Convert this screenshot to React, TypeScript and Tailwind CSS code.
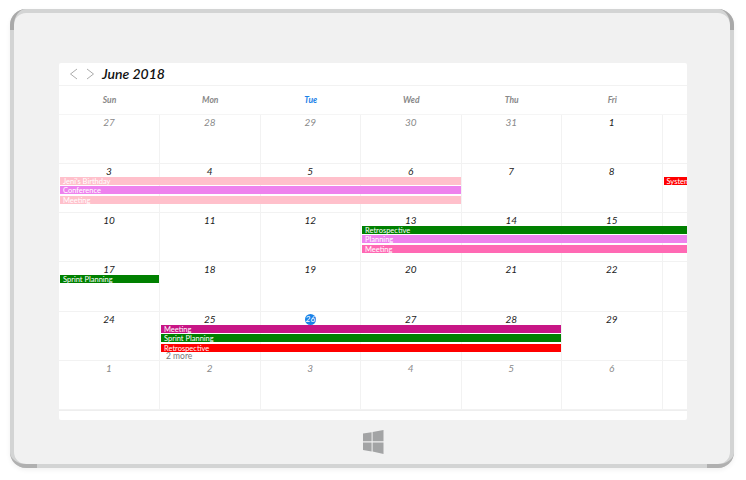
import React from "react";

const COLS_TEMPLATE = "grid-cols-[101px_100.5px_100.5px_100.5px_100.5px_100.5px_100.5px]";

function Bar({ label, cls, pos }: { label: string; cls: string; pos: string }) {
  return (
    <div className={`${pos} ${cls} h-2 my-px mx-px overflow-hidden whitespace-nowrap pl-[3px] text-[7.5px] leading-[10px] text-white z-10`}>
      {label}
    </div>
  );
}

function Cell({ d, col, muted, today }: { d?: number; col: string; muted?: boolean; today?: boolean }) {
  return (
    <div className={`${col} row-start-1 row-span-5 border-r border-[#f2f2f2] flex justify-center`}>
      {today ? (
        <span className="w-[11px] h-[11px] mt-[2px] rounded-full bg-[#1b82e8] text-white text-[8.5px] leading-[11px] italic text-center">{d}</span>
      ) : (
        <span className={`text-[10px] leading-[14px] italic ${muted ? "text-[#8a8a8a]" : "text-[#222]"}`}>{d}</span>
      )}
    </div>
  );
}

const COLS = ["col-start-1", "col-start-2", "col-start-3", "col-start-4", "col-start-5", "col-start-6"];

function Week({ days, muted, today, children, h }: { days: number[]; muted?: number[]; today?: number; children?: React.ReactNode; h: string }) {
  return (
    <div className={`${h} shrink-0 border-b border-[#f2f2f2] grid ${COLS_TEMPLATE} grid-rows-[12px_9.33px_9.33px_9.33px_1fr] overflow-hidden`}>
      {days.map((d, i) => (
        <Cell key={i} d={d} col={COLS[i]} today={today === i} muted={muted?.includes(d)} />
      ))}
      {children}
    </div>
  );
}

export default function App() {
  return (
    <div className="[font-family:'Lato','Open_Sans',sans-serif] w-[746px] h-[480px] bg-white overflow-hidden pt-[9px] pl-[10px]">
      <div className="relative w-[724px] h-[459px] rounded-[16px] border-[4px] border-[#d3d4d4] bg-[#f1f1f1] shadow-[0_2px_5px_rgba(0,0,0,0.06)] pt-[50px] pl-[45px]">
        <div className="absolute -left-1 -top-1 w-[16px] h-[21px] border-l-[4px] rounded-tl-[16px] border-[#a9a9a9]" />
        <div className="absolute -right-1 -top-1 w-[16px] h-[21px] border-r-[4px] rounded-tr-[16px] border-[#a9a9a9]" />
        <div className="absolute -left-1 -bottom-1 w-[27px] h-[16px] border-b-[4px] rounded-bl-[16px] border-[#b0b0b0]" />
        <div className="absolute -right-1 -bottom-1 w-[27px] h-[16px] border-b-[4px] rounded-br-[16px] border-[#b0b0b0]" />
        <div className="w-[628px] h-[357px] bg-white rounded-[2px] overflow-hidden flex flex-col">
          <div className="h-[23px] shrink-0 border-b border-[#f2f2f2] flex items-center pl-[10px]">
            <svg width="10" height="12" viewBox="0 0 10 12" fill="none" stroke="#ababab" strokeWidth="1"><path d="M8 1 1.5 6 8 11" /></svg>
            <svg className="ml-[7px]" width="10" height="12" viewBox="0 0 10 12" fill="none" stroke="#ababab" strokeWidth="1"><path d="M1 1 7.5 6 1 11" /></svg>
            <span className="ml-[6px] text-[14px] leading-[22px] font-semibold italic text-[#111]">June 2018</span>
          </div>
          <div className={`h-[29px] shrink-0 border-b border-[#f5f5f5] grid ${COLS_TEMPLATE} items-center text-center text-[8.5px] font-bold italic text-[#888]`}>
            <span>Sun</span>
            <span>Mon</span>
            <span className="text-[#1b82e8]">Tue</span>
            <span>Wed</span>
            <span>Thu</span>
            <span>Fri</span>
          </div>
          <Week h="h-[49px]" days={[27, 28, 29, 30, 31, 1]} muted={[27, 28, 29, 30, 31]} />
          <Week h="h-[49px]" days={[3, 4, 5, 6, 7, 8]}>
            <Bar label="Jeni's Birthday" cls="bg-[#ffc0cb]" pos="col-start-1 col-span-4 row-start-2" />
            <Bar label="Conference" cls="bg-[#ee82ee]" pos="col-start-1 col-span-4 row-start-3" />
            <Bar label="Meeting" cls="bg-[#ffc0cb]" pos="col-start-1 col-span-4 row-start-4" />
            <Bar label="System" cls="bg-[#ff0000]" pos="col-start-7 row-start-2" />
          </Week>
          <Week h="h-[49px]" days={[10, 11, 12, 13, 14, 15]}>
            <Bar label="Retrospective" cls="bg-[#008000]" pos="col-start-4 col-span-4 row-start-2" />
            <Bar label="Planning" cls="bg-[#ee82ee]" pos="col-start-4 col-span-4 row-start-3" />
            <Bar label="Meeting" cls="bg-[#ff69b4]" pos="col-start-4 col-span-4 row-start-4" />
          </Week>
          <Week h="h-[50px]" days={[17, 18, 19, 20, 21, 22]}>
            <Bar label="Sprint Planning" cls="bg-[#008000]" pos="col-start-1 row-start-2" />
          </Week>
          <Week h="h-[49px]" days={[24, 25, 26, 27, 28, 29]} today={2}>
            <Bar label="Meeting" cls="bg-[#c71585]" pos="col-start-2 col-span-4 row-start-2" />
            <Bar label="Sprint Planning" cls="bg-[#008000]" pos="col-start-2 col-span-4 row-start-3" />
            <Bar label="Retrospective" cls="bg-[#ff0000]" pos="col-start-2 col-span-4 row-start-4" />
            <span className="col-start-2 row-start-5 pl-[6px] text-[8.5px] leading-[8px] text-[#777] z-10">2 more</span>
          </Week>
          <Week h="h-[49px]" days={[1, 2, 3, 4, 5, 6]} muted={[1, 2, 3, 4, 5, 6]} />
          <div className="flex-1 border-t border-[#eeeeee]" />
        </div>
        <div className="flex justify-center mt-[10px] w-[628px]">
          <svg width="21" height="24" viewBox="0 0 21 24" fill="#a3a4a5"><path d="M0 3.6 8.6 2.3V11.2H0ZM9.6 2.1 20.5 0V11.2H9.6ZM0 12.4H8.6V21.4L0 20.1ZM9.6 12.4H20.5V24L9.6 21.6Z" /></svg>
        </div>
      </div>
    </div>
  );
}
